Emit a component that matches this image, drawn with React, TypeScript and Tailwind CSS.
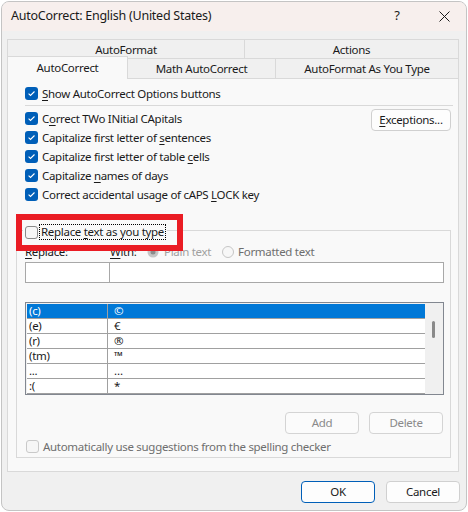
import type { ReactNode } from "react";
import clsx from "clsx";

function Check({ checked, disabled }: { checked?: boolean; disabled?: boolean }) {
  if (checked) {
    return (
      <span className="flex h-[13px] w-[13px] shrink-0 items-center justify-center rounded-[3px] bg-[#005fb8]">
        <svg width="9" height="9" viewBox="0 0 9 9">
          <path d="M1.6 4.7 3.5 6.5 7.5 2.5" fill="none" stroke="white" strokeWidth="1.1" />
        </svg>
      </span>
    );
  }
  return (
    <span
      className={clsx(
        "h-[13px] w-[13px] shrink-0 rounded-[3px] border bg-[#f6f6f6]",
        disabled ? "border-[#c9c9c9]" : "border-[#8a8a8a]"
      )}
    />
  );
}

function Option({ children }: { children: ReactNode }) {
  return (
    <div className="flex h-[19px] items-center gap-[4px]">
      <Check checked />
      <span>{children}</span>
    </div>
  );
}

function U({ children }: { children: ReactNode }) {
  return <span className="underline underline-offset-[2px]">{children}</span>;
}

const entries = [
  ["(c)", "©"],
  ["(e)", "€"],
  ["(r)", "®"],
  ["(tm)", "™"],
  ["...", "…"],
  [":(", "*"],
];

export default function App() {
  return (
    <div className="relative h-[512px] w-[468px] bg-white pl-px pt-px font-['Noto_Sans',sans-serif] text-[11.5px] tracking-[-0.3px] text-[#1a1a1a]">
      <div className="flex h-[510px] w-[466px] flex-col overflow-hidden rounded-[8px] border border-[#c4c4c4] bg-[#f0f0f0]">
        {/* title bar */}
        <div className="flex h-[29px] shrink-0 items-center bg-[#f7efed] pb-px pl-[9px] tracking-[-0.25px]">
          <span className="flex-1 text-[12.5px]">AutoCorrect: English (United States)</span>
          <span className="w-[46px] text-center text-[13px]">?</span>
          <span className="flex w-[46px] items-center justify-center pl-[2px]">
            <svg width="11" height="11" viewBox="0 0 11 11">
              <path d="M0.5 0.5 10.5 10.5 M10.5 0.5 0.5 10.5" stroke="#1a1a1a" strokeWidth="1" />
            </svg>
          </span>
        </div>

        {/* tabs */}
        <div className="pl-[5px] pr-[7px] pt-[8px]">
          <div className="flex h-[20px]">
            <div className="flex w-[238px] items-center justify-center border border-b-0 border-[#d9d9d9]">AutoFormat</div>
            <div className="flex flex-1 items-center justify-center border border-b-0 border-l-0 border-[#d9d9d9]">Actions</div>
          </div>
          <div className="relative z-10 -mt-px flex h-[20px] items-end">
            <div className="-mb-px flex h-[23px] w-[121px] items-center justify-center border border-b-0 border-[#d9d9d9] bg-[#f9f9f9]">
              AutoCorrect
            </div>
            <div className="flex h-[20px] w-[148px] items-center justify-center border border-b-0 border-l-0 border-[#d9d9d9]">
              Math AutoCorrect
            </div>
            <div className="flex h-[20px] flex-1 items-center justify-center border border-b-0 border-l-0 border-[#d9d9d9]">
              AutoFormat As You Type
            </div>
          </div>

          {/* panel */}
          <div className="h-[394px] border border-[#d9d9d9] bg-[#f9f9f9] pl-[8px] pr-[7px] pt-[5px]">
            <div className="pl-[9px]">
              <Option>
                <U>S</U>how AutoCorrect Options buttons
              </Option>
            </div>
            <div className="-mr-[2px] ml-[9px] mt-[2px] h-px bg-[#d9d9d9]" />
            <div className="mt-[3px] flex justify-between pl-[9px]">
              <div>
                <Option>
                  C<U>o</U>rrect TWo INitial CApitals
                </Option>
                <Option>
                  Capitalize first letter of <U>s</U>entences
                </Option>
                <Option>
                  Capitalize first letter of table <U>c</U>ells
                </Option>
                <Option>
                  Capitalize <U>n</U>ames of days
                </Option>
                <Option>
                  Correct accidental usage of cAPS <U>L</U>OCK key
                </Option>
              </div>
              <button className="h-[22px] w-[80px] rounded-[4px] border border-[#d0d0d0] bg-[#fdfdfd]">
                <U>E</U>xceptions...
              </button>
            </div>

            {/* replace group */}
            <div className="mt-[26px] border border-[#d9d9d9] pb-[3px] pl-[8px] pr-[6px]">
              <div className="-ml-[2px] -mt-[7px] flex h-[16px] w-fit items-center gap-[2px] bg-[#f9f9f9] px-[2px]">
                <Check />
                <span className="px-[1px] leading-[14px] outline outline-1 outline-dotted outline-black">
                  Replace <U>t</U>ext as you type
                </span>
              </div>

              <div className="mt-[3px] flex h-[17px] items-center">
                <span className="w-[85px]">
                  <U>R</U>eplace:
                </span>
                <span className="w-[37px]">
                  <U>W</U>ith:
                </span>
                <span className="flex items-center gap-[5px] text-[#a0a0a0]">
                  <svg width="12" height="12" viewBox="0 0 12 12">
                    <circle cx="6" cy="6" r="5.5" fill="#c5c5c5" />
                    <circle cx="6" cy="6" r="2.5" fill="#8c8c8c" />
                  </svg>
                  Plain text
                </span>
                <span className="ml-[11px] flex items-center gap-[4px] text-[#6e6e6e]">
                  <svg width="12" height="12" viewBox="0 0 12 12">
                    <circle cx="6" cy="6" r="5.5" fill="#f7f7f7" stroke="#c5c5c5" />
                  </svg>
                  Formatted text
                </span>
              </div>

              <div className="mt-[2px] flex h-[21px]">
                <div className="w-[85px] border border-[#a8a8a8] bg-white" />
                <div className="-ml-px flex-1 border border-[#a8a8a8] bg-white" />
              </div>

              {/* list */}
              <div className="mt-[19px] flex h-[93px] border border-[#828790] bg-[#f0f0f0] p-px">
                <div className="flex-1 bg-white">
                  {entries.map(([a, b], i) => (
                    <div
                      key={a}
                      className={clsx(
                        "flex h-[15px] items-center border-b border-[#a0a0a0] leading-[14px]",
                        i === 0 && "bg-[#0078d7] text-white"
                      )}
                    >
                      <span className="h-full w-[81px] border-r border-[#a0a0a0] pl-[2px]">{a}</span>
                      <span className="pl-[6px]">{b}</span>
                    </div>
                  ))}
                </div>
                <div className="w-[17px] bg-[#f0f0f0] pl-[7px] pt-[17px]">
                  <div className="h-[17px] w-[3px] rounded-full bg-[#8a8a8a]" />
                </div>
              </div>

              <div className="mr-px mt-[17px] flex justify-end gap-[10px] text-[#8a8a8a]">
                <button className="h-[22px] w-[74px] rounded-[4px] border border-[#d4d4d4] bg-[#fbfbfb]">Add</button>
                <button className="h-[22px] w-[74px] rounded-[4px] border border-[#d4d4d4] bg-[#fbfbfb]">Delete</button>
              </div>

              <div className="mt-[5px] flex h-[15px] items-center gap-[4px] pl-px text-[#6e6e6e]">
                <Check disabled />
                <span>Automatically use suggestions from the spelling checker</span>
              </div>
            </div>
          </div>
        </div>

        {/* footer */}
        <div className="mt-[9px] flex justify-end gap-[11px] pr-[6px]">
          <button className="h-[22px] w-[74px] rounded-[4px] border border-[#005fb8] bg-[#fdfdfd]">OK</button>
          <button className="h-[22px] w-[74px] rounded-[4px] border border-[#d0d0d0] bg-[#fdfdfd]">Cancel</button>
        </div>
      </div>

      {/* annotation */}
      <div className="absolute left-[16px] top-[214px] h-[37px] w-[167px] border-[6px] border-[#ea1c24]" />
    </div>
  );
}
